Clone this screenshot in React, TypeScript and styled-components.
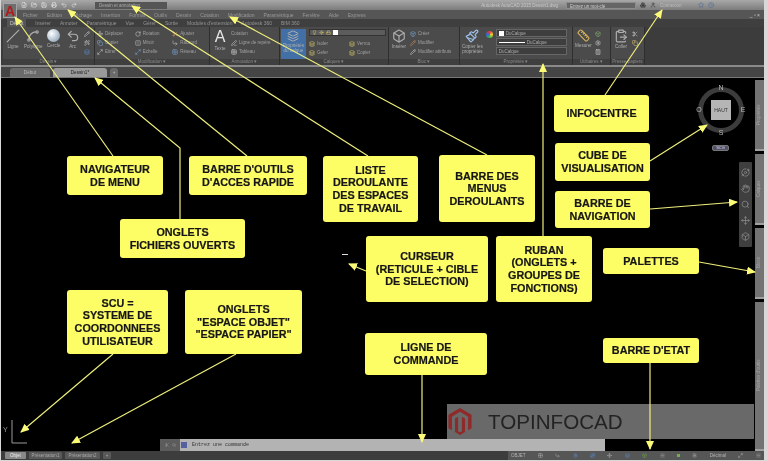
import React from "react";
import styled, { createGlobalStyle } from "styled-components";
import {
  Slash, Spline, Redo2, Undo2, Move, RotateCw, Scissors, Copy, FlipHorizontal, CornerDownRight,
  Maximize2, Grid2x2, Table, Layers, Lightbulb, Sun, Lock, FilePlus, FolderOpen, Save, Printer,
  Ruler, ClipboardPaste, Calculator, Hand, Search, Box, Orbit, Settings, User, Clock, Star,
  Menu, Wand2, Boxes, Pencil, PenLine, Paintbrush,
} from "lucide-react";

const GlobalStyle = createGlobalStyle`
  html, body {
    margin: 0;
    padding: 0;
    background: #dcdcdc;
  }
  body {
    font-family: "Liberation Sans", Arial, sans-serif;
    overflow: hidden;
  }
`;

const Screen = styled.div`
  position: relative;
  width: 768px;
  height: 461px;
  display: flex;
  flex-direction: column;
  box-sizing: border-box;
  padding: 0 4px 1px 1px;
  background: #d8d8d8;
  overflow: hidden;
  filter: blur(0.35px);
`;

/* ---------- title bar ---------- */
const TitleBar = styled.div`
  position: relative;
  z-index: 1;
  height: 10px;
  display: flex;
  align-items: center;
  background: linear-gradient(#a8a8a8, #7c7c7c);
  color: #ddd;
  font-size: 4.5px;
`;
const AppButton = styled.div`
  width: 14px;
  height: 15px;
  margin: 3px 4px 0 2px;
  align-self: flex-start;
  background: #6e6e6e;
  border: 1px solid #a4a4a4;
  box-sizing: border-box;
  display: flex;
  align-items: center;
  justify-content: center;
  color: #b31b1b;
  font-size: 14px;
  font-weight: bold;
`;
const QuickIcons = styled.div`
  width: 74px;
  display: flex;
  gap: 4px;
  color: #eee;
  filter: blur(0.4px);
`;
const WorkspaceBox = styled.div`
  width: 72px;
  height: 7px;
  padding-left: 4px;
  box-sizing: border-box;
  background: #555;
  color: #aaa;
  line-height: 7px;
  filter: blur(0.5px);
`;
const TitleText = styled.div`
  flex: 1;
  text-align: right;
  padding-right: 8px;
  color: #c8c8c8;
  white-space: nowrap;
  filter: blur(0.6px);
`;
const SearchBox = styled.div`
  width: 70px;
  height: 7px;
  line-height: 7px;
  padding-left: 3px;
  box-sizing: border-box;
  background: #666;
  color: #ccc;
  border: 1px solid #8c8c8c;
  margin-right: 4px;
`;
const InfoIcons = styled.div`
  width: 124px;
  display: flex;
  align-items: center;
  gap: 4px;
  color: #333;
  span { color: #bbb; margin-right: 12px; }
`;

/* ---------- menus ---------- */
const MenuBar = styled.div`
  height: 9px;
  display: flex;
  align-items: center;
  gap: 9px;
  padding-left: 22px;
  background: #565656;
  color: #989898;
  font-size: 5px;
  white-space: nowrap;
  filter: blur(0.5px);
`;
const WindowTools = styled.span`
  margin-left: auto;
  padding-right: 4px;
  color: #ccc;
`;
const RibbonTabs = styled.div`
  height: 8px;
  display: flex;
  align-items: center;
  gap: 9px;
  padding-left: 6px;
  background: #3f3f3f;
  color: #aaa;
  font-size: 5px;
  white-space: nowrap;
  filter: blur(0.5px);
`;
const RibbonTab = styled.span<{ $active?: boolean }>`
  color: ${(p) => (p.$active ? "#ccc" : "#949494")};
  ${(p) => p.$active && "background: #555; padding: 1px 3px;"}
`;

/* ---------- ribbon ---------- */
const Ribbon = styled.div`
  height: 38px;
  display: flex;
  padding-left: 2px;
  background: #3c3c3c;
  filter: blur(0.55px);
`;
const Panel = styled.div<{ $w: number }>`
  width: ${(p) => p.$w}px;
  flex: none;
  display: flex;
  flex-direction: column;
  background: #4b4b4b;
  border-right: 1px solid #2e2e2e;
  box-sizing: border-box;
`;
const PanelBody = styled.div`
  flex: 1;
  display: flex;
  gap: 3px;
  padding: 2px 2px 0;
  min-height: 0;
`;
const PanelTitle = styled.div`
  height: 6px;
  line-height: 6px;
  text-align: center;
  background: #3f3f3f;
  color: #8a8a8a;
  font-size: 4.5px;
`;
const BigTool = styled.div<{ $active?: boolean }>`
  display: flex;
  flex-direction: column;
  align-items: center;
  gap: 1px;
  min-width: 16px;
  color: #aeaeae;
  font-size: 4.6px;
  line-height: 5px;
  text-align: center;
  ${(p) => p.$active && "background: #416fa6; padding: 1px 2px; margin-left: -1px;"}
`;
const Sphere = styled.div`
  width: 13px;
  height: 13px;
  border-radius: 50%;
  background: radial-gradient(circle at 35% 35%, #fff, #9fb3c5 70%);
`;
const BigLetter = styled.div`
  font-size: 16px;
  line-height: 16px;
  color: #e4e4e4;
`;
const SmallGrid = styled.div<{ $cols: number }>`
  flex: 1;
  display: grid;
  grid-template-columns: repeat(${(p) => p.$cols}, 1fr);
  grid-auto-rows: 9px;
  column-gap: 3px;
  align-items: center;
`;
const SmallTool = styled.div<{ $color?: string }>`
  display: flex;
  align-items: center;
  gap: 2px;
  font-size: 4.5px;
  color: #a0a0a0;
  white-space: nowrap;
  overflow: hidden;
  svg { color: ${(p) => p.$color || "#d0d0d0"}; flex: none; }
`;
const LayerColumn = styled.div`
  flex: 1;
  display: flex;
  flex-direction: column;
  gap: 3px;
`;
const LayerSelect = styled.div`
  height: 7px;
  display: flex;
  align-items: center;
  gap: 2px;
  padding-left: 2px;
  background: #5c5c5c;
  border: 1px solid #333;
  box-sizing: border-box;
  svg { color: #e8d86a; }
`;
const Swatch = styled.span`
  width: 5px;
  height: 5px;
  background: #fff;
`;
const PropSelect = styled.div`
  height: 8px;
  display: flex;
  align-items: center;
  gap: 2px;
  padding: 0 2px;
  background: #3e3e3e;
  border: 1px solid #666;
  box-sizing: border-box;
  font-size: 4.5px;
  color: #aaa;
`;
const WhiteLine = styled.span`
  width: 26px;
  height: 1px;
  background: #fff;
`;
const PropColumn = styled.div`
  width: 71px;
  display: flex;
  flex-direction: column;
  gap: 1px;
`;
const Wheel = styled.div`
  width: 7px;
  height: 7px;
  margin-top: 2px;
  border-radius: 50%;
  background: conic-gradient(#e33, #ec3, #3b4, #36d, #e33);
`;
const RibbonGap = styled.div`
  height: 2px;
  background: #8a8a8a;
`;

/* ---------- file tabs ---------- */
const FileTabs = styled.div`
  height: 11px;
  display: flex;
  align-items: flex-end;
  gap: 3px;
  padding-left: 9px;
  background: #454545;
  border-bottom: 1px solid #777;
  box-sizing: border-box;
  filter: blur(0.5px);
`;
const FileTab = styled.div<{ $w: number; $active?: boolean }>`
  width: ${(p) => p.$w}px;
  height: 9px;
  line-height: 9px;
  text-align: center;
  border-radius: 3px 3px 0 0;
  font-size: 4.6px;
  background: ${(p) => (p.$active ? "#9a9a9a" : "#6a6a6a")};
  color: ${(p) => (p.$active ? "#222" : "#bbb")};
`;

/* ---------- drawing area ---------- */
const Drawing = styled.div`
  position: relative;
  flex: 1;
  display: flex;
  background: #000;
  min-height: 0;
`;
const Viewport = styled.div`
  flex: 1;
`;
const PaletteColumn = styled.div`
  width: 9px;
  margin-top: 2px;
  display: flex;
  flex-direction: column;
  gap: 3px;
`;
const PaletteStrip = styled.div<{ $h: number; $grow?: boolean }>`
  height: ${(p) => p.$h}px;
  ${(p) => p.$grow && "flex: 1;"}
  background: #737373;
  border-top: 2px solid #a0a0a0;
  box-sizing: border-box;
  writing-mode: vertical-rl;
  transform: rotate(180deg);
  text-align: center;
  font-size: 4.5px;
  line-height: 7px;
  color: #a6a6a6;
  overflow: hidden;
  white-space: nowrap;
  filter: blur(0.5px);
`;
const CompassBox = styled.div`
  position: absolute;
  left: 691px;
  top: 3px;
`;
const SystemPill = styled.div`
  position: absolute;
  left: 711px;
  top: 67px;
  width: 17px;
  height: 6px;
  border-radius: 2px;
  background: #50506a;
  border: 1px solid #777;
  box-sizing: border-box;
  color: #ddd;
  font-size: 4px;
  line-height: 4px;
  text-align: center;
`;
const NavBar = styled.div`
  position: absolute;
  left: 738px;
  top: 84px;
  width: 13px;
  height: 85px;
  background: #3f3f3f;
  border-radius: 1px;
  display: flex;
  flex-direction: column;
  align-items: center;
  justify-content: space-around;
  padding: 3px 0;
  box-sizing: border-box;
  color: #8b8b8b;
`;
const Watermark = styled.div`
  position: absolute;
  left: 446px;
  top: 326px;
  width: 307px;
  height: 35px;
  display: flex;
  align-items: center;
  gap: 16px;
  padding-left: 1px;
  box-sizing: border-box;
  background: #696969;
`;
const WatermarkText = styled.span`
  font-size: 20.6px;
  color: #232323;
`;
const CommandLine = styled.div`
  position: absolute;
  left: 159px;
  top: 361px;
  width: 445px;
  height: 12px;
  display: flex;
  align-items: center;
  background: #b3b3b3;
  font-size: 5px;
  color: #333;
  font-family: "Liberation Mono", monospace;
`;
const CommandLead = styled.div`
  width: 20px;
  height: 100%;
  margin-right: 1px;
  display: flex;
  align-items: center;
  justify-content: center;
  gap: 3px;
  background: #5c5c5c;
  color: #aaa;
`;
const CommandPrompt = styled.span`
  width: 6px;
  height: 6px;
  margin-right: 5px;
  background: #5560a0;
`;
const CursorDash = styled.div`
  position: absolute;
  left: 341px;
  top: 176px;
  width: 6px;
  height: 1px;
  background: #ddd;
`;
const UcsText = styled.span`
  position: absolute;
  left: 2px;
  top: 348px;
  color: #999;
  font-size: 7px;
`;
const UcsMark = styled.svg`
  position: absolute;
  left: 8px;
  top: 340px;
`;

/* ---------- status bar ---------- */
const StatusBar = styled.div`
  height: 9px;
  display: flex;
  align-items: center;
  background: #3d3d3d;
  filter: blur(0.5px);
`;
const LayoutTabs = styled.div`
  display: flex;
  gap: 3px;
  padding-left: 4px;
`;
const LayoutTab = styled.div<{ $w: number; $active?: boolean }>`
  width: ${(p) => p.$w}px;
  height: 7px;
  line-height: 7px;
  text-align: center;
  font-size: 4.5px;
  border-radius: 1px;
  background: ${(p) => (p.$active ? "#888" : "#595959")};
  color: ${(p) => (p.$active ? "#eee" : "#aaa")};
`;
const StatusTools = styled.div`
  margin-left: auto;
  width: 256px;
  height: 100%;
  display: flex;
  align-items: center;
  justify-content: space-between;
  padding: 0 3px;
  box-sizing: border-box;
  background: #565656;
  color: #b4b4b4;
  font-size: 4.5px;
`;
const StatusDot = styled.span`
  width: 3px;
  height: 3px;
  background: #6db04d;
`;

/* ---------- annotations ---------- */
const ArrowLayer = styled.svg`
  position: absolute;
  left: 0;
  top: 0;
  z-index: 2;
  pointer-events: none;
`;
const Callout = styled.div<{ $x: number; $y: number; $w: number; $h: number }>`
  position: absolute;
  z-index: 3;
  left: ${(p) => p.$x}px;
  top: ${(p) => p.$y}px;
  width: ${(p) => p.$w}px;
  height: ${(p) => p.$h}px;
  display: flex;
  align-items: center;
  justify-content: center;
  text-align: center;
  white-space: pre-line;
  background: #fdfd66;
  border-radius: 3px;
  color: #161616;
  font-size: 10.8px;
  font-weight: bold;
  line-height: 12.6px;
  -webkit-text-stroke: 0.2px #161616;
`;

const callouts = [
  { x: 67, y: 156, w: 96, h: 39, text: "NAVIGATEUR\nDE MENU" },
  { x: 189, y: 156, w: 118, h: 39, text: "BARRE D'OUTILS\nD'ACCES RAPIDE" },
  { x: 323, y: 156, w: 95, h: 66, text: "LISTE\nDEROULANTE\nDES ESPACES\nDE TRAVAIL" },
  { x: 439, y: 155, w: 96, h: 67, text: "BARRE DES\nMENUS\nDEROULANTS" },
  { x: 120, y: 219, w: 125, h: 39, text: "ONGLETS\nFICHIERS OUVERTS" },
  { x: 366, y: 236, w: 122, h: 66, text: "CURSEUR\n(RETICULE + CIBLE\nDE SELECTION)" },
  { x: 496, y: 236, w: 96, h: 66, text: "RUBAN\n(ONGLETS +\nGROUPES DE\nFONCTIONS)" },
  { x: 554, y: 95, w: 95, h: 37, text: "INFOCENTRE" },
  { x: 555, y: 143, w: 95, h: 38, text: "CUBE DE\nVISUALISATION" },
  { x: 555, y: 191, w: 95, h: 37, text: "BARRE DE\nNAVIGATION" },
  { x: 603, y: 248, w: 96, h: 26, text: "PALETTES" },
  { x: 67, y: 290, w: 101, h: 64, text: "SCU =\nSYSTEME DE\nCOORDONNEES\nUTILISATEUR" },
  { x: 185, y: 290, w: 117, h: 64, text: "ONGLETS\n\"ESPACE OBJET\"\n\"ESPACE PAPIER\"" },
  { x: 365, y: 333, w: 122, h: 42, text: "LIGNE DE\nCOMMANDE" },
  { x: 603, y: 338, w: 96, h: 25, text: "BARRE D'ETAT" },
];

const arrows = [
  "113,156 15,17",
  "247,156 68,10",
  "368,156 132,6",
  "487,155 230,17",
  "180,219 180,148 95,78",
  "543,236 543,64",
  "605,95 662,10",
  "650,161 707,125",
  "650,209 737,202",
  "699,262 755,272",
  "366,271 349,264",
  "113,354 21,432",
  "236,354 72,443",
  "422,375 422,442",
  "650,363 650,449",
];

const small = 6;

function Compass() {
  return (
    <svg width="58" height="62" viewBox="0 0 58 62">
      <circle cx="29" cy="29" r="20.5" fill="none" stroke="#3c3c3c" strokeWidth="5" />
      <rect x="19" y="19" width="20" height="20" fill="#b5b5b5" />
      <text x="29" y="31" fontSize="5" textAnchor="middle" fill="#333" fontFamily="Liberation Sans">HAUT</text>
      <text x="29" y="9" fontSize="7" textAnchor="middle" fill="#bbb" fontFamily="Liberation Sans">N</text>
      <text x="29" y="54" fontSize="7" textAnchor="middle" fill="#bbb" fontFamily="Liberation Sans">S</text>
      <text x="7" y="31" fontSize="7" textAnchor="middle" fill="#bbb" fontFamily="Liberation Sans">O</text>
      <text x="51" y="31" fontSize="7" textAnchor="middle" fill="#bbb" fontFamily="Liberation Sans">E</text>
    </svg>
  );
}

function MagentoMark() {
  return (
    <svg width="24" height="27" viewBox="0 0 24 28">
      <path fill="#8e2a2a" d="M12 0 24 7v14l-3.6 2V9L12 4 3.6 9v14L0 21V7z" />
      <path fill="#8e2a2a" d="M6.8 10.8 10 9v15l2 1.2 2-1.2V9l3.2 1.8V25L12 28l-5.2-3z" />
    </svg>
  );
}

export default function App() {
  return (
    <>
      <GlobalStyle />
      <Screen>
        <TitleBar>
          <AppButton>A</AppButton>
          <QuickIcons>
            <FilePlus size={small} />
            <FolderOpen size={small} />
            <Save size={small} />
            <Printer size={small} />
            <Undo2 size={small} />
            <Redo2 size={small} />
          </QuickIcons>
          <WorkspaceBox>Dessin et annotation</WorkspaceBox>
          <TitleText>Autodesk AutoCAD 2015   Dessin1.dwg</TitleText>
          <SearchBox>Entrez un mot-clé</SearchBox>
          <InfoIcons>
            <Boxes size={small} />
            <User size={small} />
            <span>Connexion</span>
            <Star size={small} color="#4a6a9a" />
            <Clock size={small} color="#4a6a9a" />
          </InfoIcons>
        </TitleBar>
        <MenuBar>
          {["Fichier", "Edition", "Affichage", "Insertion", "Format", "Outils", "Dessin", "Cotation", "Modification", "Paramétrique", "Fenêtre", "Aide", "Express"].map((m) => (
            <span key={m}>{m}</span>
          ))}
          <WindowTools>_ ▫ ×</WindowTools>
        </MenuBar>
        <RibbonTabs>
          <RibbonTab $active>Début</RibbonTab>
          {["Insérer", "Annoter", "Paramétrique", "Vue", "Gérer", "Sortie", "Modules d'extension", "Autodesk 360", "BIM 360"].map((t) => (
            <RibbonTab key={t}>{t}</RibbonTab>
          ))}
        </RibbonTabs>
        <Ribbon>
          <Panel $w={92}>
            <PanelBody>
              <BigTool><Slash size={14} />Ligne</BigTool>
              <BigTool><Spline size={14} />Polyligne</BigTool>
              <BigTool><Sphere />Cercle</BigTool>
              <BigTool><Undo2 size={14} />Arc</BigTool>
              <SmallGrid $cols={1}>
                <SmallTool><Pencil size={small} /></SmallTool>
                <SmallTool><Wand2 size={small} /></SmallTool>
                <SmallTool $color="#5f8fd0"><Layers size={small} /></SmallTool>
              </SmallGrid>
            </PanelBody>
            <PanelTitle>Dessin ▾</PanelTitle>
          </Panel>
          <Panel $w={115}>
            <PanelBody>
              <SmallGrid $cols={3}>
                <SmallTool><Move size={small} />Déplacer</SmallTool>
                <SmallTool><RotateCw size={small} />Rotation</SmallTool>
                <SmallTool $color="#d09060"><Scissors size={small} />Ajuster</SmallTool>
                <SmallTool $color="#7fa8d8"><Copy size={small} />Copier</SmallTool>
                <SmallTool><FlipHorizontal size={small} />Miroir</SmallTool>
                <SmallTool><CornerDownRight size={small} />Raccord</SmallTool>
                <SmallTool><Maximize2 size={small} />Etirer</SmallTool>
                <SmallTool $color="#7fa8d8"><Maximize2 size={small} />Echelle</SmallTool>
                <SmallTool $color="#7fa8d8"><Grid2x2 size={small} />Réseau</SmallTool>
              </SmallGrid>
            </PanelBody>
            <PanelTitle>Modification ▾</PanelTitle>
          </Panel>
          <Panel $w={70}>
            <PanelBody>
              <BigTool><BigLetter>A</BigLetter>Texte</BigTool>
              <SmallGrid $cols={1}>
                <SmallTool>Cotation</SmallTool>
                <SmallTool><PenLine size={small} />Ligne de repère</SmallTool>
                <SmallTool><Table size={small} />Tableau</SmallTool>
              </SmallGrid>
            </PanelBody>
            <PanelTitle>Annotation ▾</PanelTitle>
          </Panel>
          <Panel $w={109}>
            <PanelBody>
              <BigTool $active><Layers size={12} />Propriétés<br />du calque</BigTool>
              <LayerColumn>
                <LayerSelect>
                  <Lightbulb size={5} />
                  <Sun size={5} />
                  <Lock size={5} />
                  <Swatch />
                </LayerSelect>
                <SmallGrid $cols={2}>
                  <SmallTool $color="#e8d86a"><Layers size={small} />Isoler</SmallTool>
                  <SmallTool $color="#e8d86a"><Layers size={small} />Verrou</SmallTool>
                  <SmallTool $color="#e8d86a"><Layers size={small} />Geler</SmallTool>
                  <SmallTool $color="#e8d86a"><Layers size={small} />Copier</SmallTool>
                </SmallGrid>
              </LayerColumn>
            </PanelBody>
            <PanelTitle>Calques ▾</PanelTitle>
          </Panel>
          <Panel $w={71}>
            <PanelBody>
              <BigTool><Box size={14} />Insérer</BigTool>
              <SmallGrid $cols={1}>
                <SmallTool $color="#7fa8d8"><Box size={small} />Créer</SmallTool>
                <SmallTool $color="#d09060"><Pencil size={small} />Modifier</SmallTool>
                <SmallTool><Pencil size={small} />Modifier attributs</SmallTool>
              </SmallGrid>
            </PanelBody>
            <PanelTitle>Bloc ▾</PanelTitle>
          </Panel>
          <Panel $w={113}>
            <PanelBody>
              <BigTool><Paintbrush size={14} color="#9fc0e8" />Copier les<br />propriétés</BigTool>
              <Wheel />
              <PropColumn>
                <PropSelect><Swatch />DuCalque</PropSelect>
                <PropSelect><WhiteLine />DuCalque</PropSelect>
                <PropSelect>DuCalque</PropSelect>
              </PropColumn>
            </PanelBody>
            <PanelTitle>Propriétés ▾</PanelTitle>
          </Panel>
          <Panel $w={38}>
            <PanelBody>
              <BigTool><Ruler size={13} color="#d9b45a" />Mesurer</BigTool>
              <SmallGrid $cols={1}>
                <SmallTool $color="#8bb86a"><Box size={small} /></SmallTool>
                <SmallTool><Settings size={small} /></SmallTool>
                <SmallTool><Calculator size={small} /></SmallTool>
              </SmallGrid>
            </PanelBody>
            <PanelTitle>Utilitaires ▾</PanelTitle>
          </Panel>
          <Panel $w={34}>
            <PanelBody>
              <BigTool><ClipboardPaste size={14} />Coller</BigTool>
              <SmallGrid $cols={1}>
                <SmallTool><Scissors size={small} /></SmallTool>
                <SmallTool $color="#d8c070"><Copy size={small} /></SmallTool>
              </SmallGrid>
            </PanelBody>
            <PanelTitle>Presse-papiers</PanelTitle>
          </Panel>
        </Ribbon>
        <RibbonGap />
        <FileTabs>
          <FileTab $w={40}>Début</FileTab>
          <FileTab $w={54} $active>Dessin1*</FileTab>
          <FileTab $w={8}>+</FileTab>
        </FileTabs>
        <Drawing>
          <Viewport />
          <PaletteColumn>
            <PaletteStrip $h={71}>Propriétés</PaletteStrip>
            <PaletteStrip $h={71}>Calques</PaletteStrip>
            <PaletteStrip $h={71}>Blocs</PaletteStrip>
            <PaletteStrip $h={0} $grow>Palettes d'outils</PaletteStrip>
          </PaletteColumn>
          <CompassBox>
            <Compass />
          </CompassBox>
          <SystemPill>SCG</SystemPill>
          <NavBar>
            <Orbit size={9} />
            <Hand size={9} />
            <Search size={9} />
            <Move size={9} />
            <Box size={9} />
          </NavBar>
          <CursorDash />
          <UcsMark width="20" height="28" viewBox="0 0 20 28">
            <path d="M3 2v23h15" fill="none" stroke="#9a9a9a" strokeWidth="1" />
          </UcsMark>
          <UcsText>Y</UcsText>
          <Watermark>
            <MagentoMark />
            <WatermarkText>TOPINFOCAD</WatermarkText>
          </Watermark>
          <CommandLine>
            <CommandLead>
              <Scissors size={4} />
              <Search size={4} />
            </CommandLead>
            <CommandPrompt />
            Entrez une commande
          </CommandLine>
        </Drawing>
        <StatusBar>
          <LayoutTabs>
            <LayoutTab $w={21} $active>Objet</LayoutTab>
            <LayoutTab $w={33}>Présentation1</LayoutTab>
            <LayoutTab $w={35}>Présentation2</LayoutTab>
            <LayoutTab $w={8}>+</LayoutTab>
          </LayoutTabs>
          <StatusTools>
            <span>OBJET</span>
            <Grid2x2 size={5} />
            <CornerDownRight size={5} />
            <Settings size={5} color="#5f8fd0" />
            <Orbit size={5} color="#5f8fd0" />
            <Move size={5} />
            <Layers size={5} color="#5f8fd0" />
            <Box size={5} color="#6db04d" />
            <Menu size={5} />
            <StatusDot />
            <Settings size={5} />
            <span>Décimal</span>
            <Maximize2 size={5} />
            <Menu size={5} />
          </StatusTools>
        </StatusBar>

        <ArrowLayer width="768" height="461" viewBox="0 0 768 461">
          <defs>
            <marker id="head" markerUnits="userSpaceOnUse" markerWidth="9" markerHeight="8" refX="8" refY="4" orient="auto">
              <path d="M0 0 9 4 0 8z" fill="#fbfb78" />
            </marker>
          </defs>
          {arrows.map((a) => (
            <polyline key={a} points={a} fill="none" stroke="#eeee7c" strokeWidth="1.2" markerEnd="url(#head)" />
          ))}
        </ArrowLayer>

        {callouts.map((c) => (
          <Callout key={c.text} $x={c.x} $y={c.y} $w={c.w} $h={c.h}>
            {c.text}
          </Callout>
        ))}
      </Screen>
    </>
  );
}
